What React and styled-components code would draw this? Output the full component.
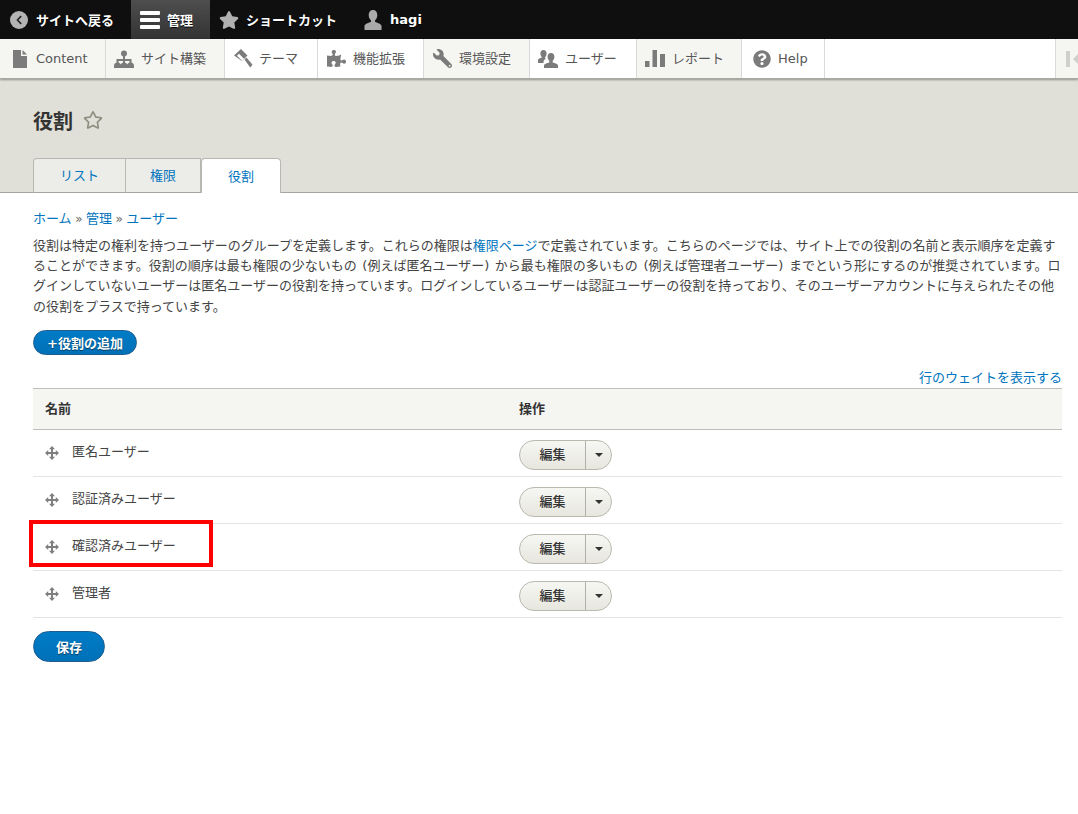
import React from 'react';
import styled, { createGlobalStyle } from 'styled-components';
import { FaPuzzlePiece, FaWrench, FaQuestionCircle, FaStar, FaRegStar, FaChevronLeft } from 'react-icons/fa';

const FONT = '"DejaVu Sans", "Noto Sans CJK JP", sans-serif';

const GlobalStyle = createGlobalStyle`
  html, body { margin: 0; padding: 0; background: #fff; }
  body { font-family: ${FONT}; font-size: 13px; color: #333; }
`;

const roles = ['匿名ユーザー', '認証済みユーザー', '確認済みユーザー', '管理者'];

const BurgerIcon = () => (
  <svg width="20" height="20" viewBox="0 0 20 20" fill="#fff">
    <rect x="0" y="1" width="20" height="4" rx="1" />
    <rect x="0" y="8" width="20" height="4" rx="1" />
    <rect x="0" y="15" width="20" height="4" rx="1" />
  </svg>
);

const FileIcon = () => (
  <svg width="16" height="20" viewBox="0 0 16 20" fill="#7b7b7b">
    <path d="M1 1h8v6h6v12H1z" />
    <path d="M10.500 1l4.500 4.500h-4.500z" />
  </svg>
);

const SitemapIcon = () => (
  <svg width="20" height="20" viewBox="0 0 20 20" fill="#7b7b7b">
    <circle cx="10" cy="4.500" r="3" />
    <rect x="9" y="6" width="2" height="8" />
    <rect x="3" y="10" width="14" height="2" />
    <rect x="2.500" y="10" width="2" height="4" />
    <rect x="15.500" y="10" width="2" height="4" />
    <path d="M0 17a3.500 3.500 0 0 1 7 0v2H0zM6.500 17a3.500 3.500 0 0 1 7 0v2h-7zM13 17a3.500 3.500 0 0 1 7 0v2h-7z" />
  </svg>
);

const BrushIcon = () => (
  <svg width="20" height="20" viewBox="0 0 20 20" fill="#7b7b7b">
    <path d="M8 0l6.500 6.500-5.500 5.500L1 6.500zM4 6.700l5.100 5L11 9.800 6 4.700z" fillRule="evenodd" />
    <path d="M11.500 10.500l2-2 6 7.300-2.300 2.700z" />
  </svg>
);

const UserIcon = () => (
  <svg width="20" height="20" viewBox="0 0 20 20" fill="#aaa">
    <path d="M10 0c2.800 0 4.300 2 4.300 5 0 2.300-1 4.300-2.200 5.300v1.700c2.800.8 6.400 2.200 6.400 4V20h-17v-4c0-1.800 3.600-3.200 6.400-4v-1.700C6.700 9.300 5.700 7.300 5.700 5 5.700 2 7.200 0 10 0z" />
  </svg>
);

const UsersIcon = () => (
  <svg width="20" height="20" viewBox="0 0 20 20" fill="#7b7b7b">
    <path d="M5.500 1c2 0 3.100 1.400 3.100 3.500 0 1.500-.6 2.900-1.500 3.700v1.300l1 .3c-1.500.7-2.600 1.700-2.600 2.900V14H0v-2.700c0-1.200 2-2.200 3.900-2.700V8.200C3 7.400 2.400 6 2.400 4.500 2.400 2.400 3.500 1 5.500 1z" />
    <path d="M13 4c2.200 0 3.400 1.600 3.400 3.800 0 1.700-.7 3.200-1.700 4v1.600c2.100.6 5.300 1.500 5.300 2.900V19H6v-2.700c0-1.400 3.200-2.300 5.300-2.900v-1.600c-1-.8-1.700-2.300-1.700-4C9.600 5.600 10.800 4 13 4z" />
  </svg>
);

const BarsIcon = () => (
  <svg width="20" height="17" viewBox="0 0 20 17" fill="#7b7b7b">
    <rect x="0" y="11" width="4.500" height="6" />
    <rect x="7.500" y="0" width="4.500" height="17" />
    <rect x="15" y="4" width="5" height="13" />
  </svg>
);

const MoveIcon = () => (
  <svg width="14" height="14" viewBox="0 0 14 14" fill="#7f7f7f">
    <path d="M7 0l3 3.200H8V6h2.800V4L14 7l-3.200 3V8H8v2.800h2L7 14l-3-3.200h2V8H3.200v2L0 7l3.200-3v2H6V3.200H4z" />
  </svg>
);

const TopBar = styled.div`
  display: flex;
  height: 39px;
  background: #0f0f0f;
`;

const TopItem = styled.a`
  display: flex;
  align-items: center;
  gap: ${p => p.$gap || 7}px;
  padding: 0 17px 0 ${p => p.$pad || 9}px;
  color: #fff;
  font-weight: 700;
  font-size: 13px;
  background: ${p => (p.$active ? 'linear-gradient(#4e4e4e, #333)' : 'transparent')};
  text-shadow: 0 1px 0 #000;
`;

const BackCircle = styled.span`
  display: flex;
  align-items: center;
  justify-content: center;
  width: 18px;
  height: 18px;
  border-radius: 50%;
  background: #b3b3b3;
  color: #222;
  font-size: 10px;
`;

const MenuBar = styled.div`
  display: flex;
  height: 39px;
  background: #fff;
  border-bottom: 1px solid #a8a8a2;
  box-shadow: 0 1px 2px rgba(0, 0, 0, 0.35);
  position: relative;
`;

const MenuItem = styled.a`
  display: flex;
  align-items: center;
  gap: ${p => p.$gap || 7}px;
  box-sizing: border-box;
  width: ${p => p.$width}px;
  padding-left: ${p => p.$pad || 9}px;
  color: #565656;
  font-size: 13px;
  border-right: 1px solid #d9d9d9;
  background: ${p => (p.$shaded ? '#f5f5f2' : '#fff')};
  svg { flex: none; color: #7b7b7b; }
`;

const JaLabel = styled.span`
  margin-top: -2px;
`;

const MirroredWrench = styled(FaWrench)`
  transform: scaleX(-1);
`;

const MenuSpacer = styled.div`
  flex: 1;
`;

const Collapse = styled.div`
  display: flex;
  align-items: center;
  gap: 3px;
  box-sizing: border-box;
  width: 23px;
  padding-left: 10px;
  background: #f5f5f2;
  border-left: 1px solid #d9d9d9;
  overflow: hidden;
`;

const CollapseBar = styled.span`
  width: 4px;
  height: 16px;
  flex: none;
  background: #cfcfcb;
`;

const CollapseArrow = styled.span`
  flex: none;
  border: 6px solid transparent;
  border-right-color: #cfcfcb;
  border-left: 0;
`;

const Header = styled.header`
  background: #e0e0d8;
  border-bottom: 1px solid #a6a6a0;
  height: 114px;
  box-sizing: border-box;
  padding: 27px 0 0 33px;
  display: flex;
  flex-direction: column;
`;

const Title = styled.h1`
  display: flex;
  align-items: center;
  gap: 10px;
  height: 28px;
  margin: 0;
  font-size: 20px;
  font-weight: 700;
  color: #333;
  svg { color: #8f8f82; }
`;

const Tabs = styled.div`
  display: flex;
  margin-top: 24px;
  height: 35px;
`;

const Tab = styled.a`
  display: flex;
  align-items: center;
  justify-content: center;
  box-sizing: border-box;
  width: ${p => p.$width}px;
  height: 35px;
  padding-bottom: 2px;
  color: #0074bd;
  font-size: 13px;
  background: ${p => (p.$active ? '#fff' : '#ecece8')};
  border: 1px solid #b8b8b2;
  border-left-width: ${p => (p.$first || p.$active ? 1 : 0)}px;
  border-bottom: ${p => (p.$active ? '0' : '1px solid #a6a6a0')};
  border-radius: ${p => (p.$first ? '4px 0 0 0' : p.$active ? '4px 4px 0 0' : '0')};
`;

const Main = styled.main`
  padding: 16px 16px 0 33px;
  line-height: 20.2px;
`;

const Breadcrumb = styled.nav`
  display: flex;
  align-items: center;
  gap: 3.5px;
  height: 20px;
  color: #0074bd;
`;

const Sep = styled.span`
  color: #666;
  font-size: 12px;
`;

const Intro = styled.p`
  margin: 7px 0 0;
  color: #444;
  word-spacing: 1.5px;
`;

const Link = styled.a`
  color: #0074bd;
`;

const PrimaryButton = styled.button`
  display: block;
  box-sizing: border-box;
  width: ${p => p.$width}px;
  height: ${p => p.$height}px;
  margin: ${p => p.$margin};
  padding: 0;
  border: 1px solid #1e5c90;
  border-radius: 20px;
  background: linear-gradient(#007bc6, #0071b8);
  color: #fff;
  font-family: ${FONT};
  font-size: 13px;
  font-weight: 700;
  text-shadow: 0 1px 1px rgba(0, 0, 0, 0.5);
`;

const WeightLink = styled.div`
  margin-top: 13px;
  height: 19px;
  text-align: right;
  color: #0074bd;
`;

const RoleTable = styled.table`
  width: 100%;
  border-collapse: collapse;
  table-layout: fixed;
  margin-top: 1px;
`;

const HeadCell = styled.th`
  height: 40px;
  padding: 0 12px;
  background: #f5f5f2;
  border-top: 1px solid #bfbfba;
  border-bottom: 1px solid #bfbfba;
  font-size: 13px;
  font-weight: 700;
  text-align: left;
  color: #333;
  width: ${p => p.$width || 'auto'};
`;

const Cell = styled.td`
  height: 46px;
  padding: 0 12px;
  border-bottom: 1px solid #e4e4e0;
  position: relative;
`;

const RoleName = styled.div`
  display: flex;
  align-items: center;
  gap: 13px;
  color: #444;
  transform: translateY(-1px);
  svg { transform: translateY(1px); }
`;

const Highlight = styled.div`
  position: absolute;
  left: -4px;
  top: -4px;
  width: 184px;
  height: 47px;
  box-sizing: border-box;
  border: 4px solid #f00;
  pointer-events: none;
`;

const DropButton = styled.div`
  display: inline-flex;
  vertical-align: middle;
  box-sizing: border-box;
  width: 93px;
  height: 30px;
  margin-top: 4px;
  border: 1px solid #b9b9b0;
  border-radius: 15px;
  background: linear-gradient(#f6f6f3, #e7e7df);
  color: #333;
`;

const DropLabel = styled.span`
  display: flex;
  align-items: center;
  justify-content: center;
  flex: 1;
  font-size: 13px;
  font-weight: 500;
`;

const DropToggle = styled.span`
  display: flex;
  align-items: center;
  justify-content: center;
  width: 25px;
  border-left: 1px solid #b0b0a8;
  &::after {
    content: '';
    border: 4px solid transparent;
    border-top-color: #333;
    border-bottom: 0;
  }
`;

export default function App() {
  return (
    <>
      <GlobalStyle />
      <TopBar>
        <TopItem $pad={10} $gap={8}><BackCircle><FaChevronLeft /></BackCircle>サイトへ戻る</TopItem>
        <TopItem $active><BurgerIcon />管理</TopItem>
        <TopItem><FaStar size={20} color="#b0b0b0" />ショートカット</TopItem>
        <TopItem><UserIcon />hagi</TopItem>
      </TopBar>
      <MenuBar>
        <MenuItem $width={106} $shaded $pad={12} $gap={8}><FileIcon />Content</MenuItem>
        <MenuItem $width={119} $shaded $pad={8}><SitemapIcon /><JaLabel>サイト構築</JaLabel></MenuItem>
        <MenuItem $width={93} $pad={8} $gap={6}><BrushIcon /><JaLabel>テーマ</JaLabel></MenuItem>
        <MenuItem $width={106}><FaPuzzlePiece size={19} /><JaLabel>機能拡張</JaLabel></MenuItem>
        <MenuItem $width={106} $shaded><MirroredWrench size={19} /><JaLabel>環境設定</JaLabel></MenuItem>
        <MenuItem $width={107} $pad={8}><UsersIcon /><JaLabel>ユーザー</JaLabel></MenuItem>
        <MenuItem $width={105} $shaded $pad={8}><BarsIcon /><JaLabel>レポート</JaLabel></MenuItem>
        <MenuItem $width={83} $pad={11}><FaQuestionCircle size={18} />Help</MenuItem>
        <MenuSpacer />
        <Collapse><CollapseBar /><CollapseArrow /></Collapse>
      </MenuBar>
      <Header>
        <Title>役割<FaRegStar size={20} /></Title>
        <Tabs>
          <Tab $first $width={93}>リスト</Tab>
          <Tab $width={75}>権限</Tab>
          <Tab $active $width={80}>役割</Tab>
        </Tabs>
      </Header>
      <Main>
        <Breadcrumb>ホーム<Sep>»</Sep>管理<Sep>»</Sep>ユーザー</Breadcrumb>
        <Intro>
          役割は特定の権利を持つユーザーのグループを定義します。これらの権限は<Link>権限ページ</Link>で定義されています。こちらのページでは、サイト上での役割の名前と表示順序を定義することができます。役割の順序は最も権限の少ないもの (例えば匿名ユーザー) から最も権限の多いもの (例えば管理者ユーザー) までという形にするのが推奨されています。ログインしていないユーザーは匿名ユーザーの役割を持っています。ログインしているユーザーは認証ユーザーの役割を持っており、そのユーザーアカウントに与えられたその他の役割をプラスで持っています。
        </Intro>
        <PrimaryButton $width={104} $height={25} $margin="13px 0 0">+役割の追加</PrimaryButton>
        <WeightLink>行のウェイトを表示する</WeightLink>
        <RoleTable>
          <thead>
            <tr>
              <HeadCell $width="450px">名前</HeadCell>
              <HeadCell>操作</HeadCell>
            </tr>
          </thead>
          <tbody>
            {roles.map(name => (
              <tr key={name}>
                <Cell>
                  <RoleName><MoveIcon />{name}</RoleName>
                  {name === '確認済みユーザー' && <Highlight />}
                </Cell>
                <Cell>
                  <DropButton>
                    <DropLabel>編集</DropLabel>
                    <DropToggle />
                  </DropButton>
                </Cell>
              </tr>
            ))}
          </tbody>
        </RoleTable>
        <PrimaryButton $width={72} $height={31} $margin="13px 0 0">保存</PrimaryButton>
      </Main>
    </>
  );
}
